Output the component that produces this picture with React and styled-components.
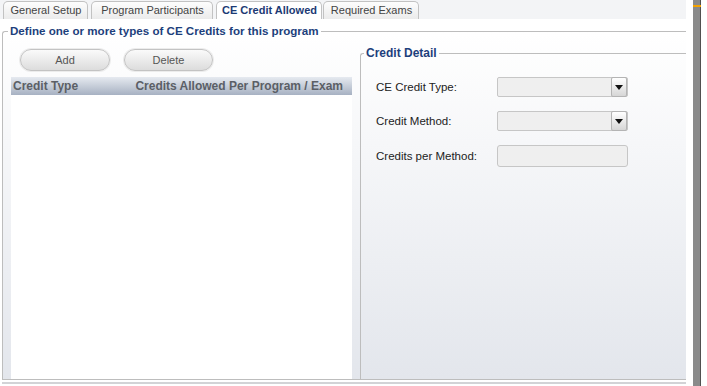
import React from "react";
import styled, { createGlobalStyle } from "styled-components";

const Global = createGlobalStyle`
  html, body { margin: 0; padding: 0; background: #ffffff; }
  body { font-family: "Liberation Sans", Arial, sans-serif; }
  * { box-sizing: border-box; }
`;

const Page = styled.div`
  width: 707px;
  height: 386px;
  display: flex;
  background: #ffffff;
  overflow: hidden;
`;

const MainCol = styled.div`
  width: 686px;
  height: 386px;
  display: flex;
  flex-direction: column;
`;

const TabBar = styled.div`
  height: 19px;
  flex: none;
  background: #f3f4f6;
  display: flex;
  align-items: flex-end;
  padding-left: 3px;
  gap: 3px;
`;

const Tab = styled.div`
  width: ${(p) => p.$w}px;
  height: 18px;
  padding: 0 0 0 1px;
  text-align: center;
  border: 1px solid #c2c2c2;
  border-bottom: none;
  border-radius: 5px 5px 0 0;
  font-size: 11px;
  line-height: 17px;
  white-space: nowrap;
  color: ${(p) => (p.$active ? "#1c3a74" : "#444")};
  font-weight: ${(p) => (p.$active ? 700 : 400)};
  background: ${(p) =>
    p.$active ? "#ffffff" : "linear-gradient(#fdfdfd, #ebebeb)"};
  margin-right: ${(p) => (p.$active ? "-2px" : "0")};
`;

const Body = styled.div`
  flex: 1;
  display: flex;
  flex-direction: column;
  padding-top: 5px;
  min-height: 0;
`;

const OuterSet = styled.fieldset`
  flex: 1;
  margin: 0 0 0 2px;
  padding: 0;
  min-width: 0;
  min-height: 0;
  border: 1px solid #bdbdbd;
  border-right: none;
  border-top-left-radius: 3px;
  background: linear-gradient(#ffffff, #e3e6ec);
  display: flex;
  flex-direction: column;
`;

const Legend = styled.legend`
  margin-left: ${(p) => p.$indent || "5px"};
  padding: 0 2px;
  font-size: ${(p) => p.$size || "11px"};
  line-height: 14px;
  font-weight: 700;
  color: #1d3f7c;
  white-space: nowrap;
`;

const Split = styled.div`
  flex: 1;
  display: flex;
  min-height: 0;
`;

const LeftCol = styled.div`
  width: 349px;
  flex: none;
  display: flex;
  flex-direction: column;
  padding: 11px 0 0 8px;
`;

const ButtonRow = styled.div`
  display: flex;
  gap: 14px;
  padding-left: 9px;
  margin-bottom: 6px;
`;

const PillButton = styled.button`
  width: ${(p) => p.$w}px;
  height: 22px;
  border: 1px solid #c3c3c3;
  border-radius: 11px;
  background: linear-gradient(#fafafa, #dcdcdc);
  box-shadow: 0 0 0 1px #ececec;
  font-family: "Liberation Sans", Arial, sans-serif;
  font-size: 11px;
  color: #555;
  padding: 0;
`;

const Grid = styled.div`
  flex: 1;
  display: flex;
  flex-direction: column;
  background: #ffffff;
`;

const GridHeader = styled.div`
  height: 18px;
  display: flex;
  justify-content: space-between;
  align-items: center;
  padding: 0 9px 0 2px;
  background: linear-gradient(#e6eaf0, #a7b1c2);
  font-size: 12px;
  font-weight: 700;
  color: #5b5f66;
  white-space: nowrap;
`;

const DetailSet = styled.fieldset`
  flex: 1;
  margin: 8px 0 0 8px;
  padding: 17px 0 0 15px;
  min-width: 0;
  border: 1px solid #bdbdbd;
  border-right: none;
  border-bottom: none;
  border-top-left-radius: 3px;
`;

const Form = styled.div`
  display: grid;
  grid-template-columns: 121px 131px;
  grid-auto-rows: min-content;
  row-gap: 14px;
  align-items: center;
`;

const Label = styled.div`
  font-size: 11.5px;
  color: #222;
  white-space: nowrap;
`;

const Select = styled.div`
  height: 20px;
  border: 1px solid #c6c6c6;
  border-radius: 2px;
  background: #efefef;
  display: flex;
  justify-content: flex-end;
  align-items: stretch;
`;

const DropButton = styled.div`
  width: 16px;
  border: 1px solid #b4b4b4;
  border-radius: 2px;
  margin: -1px 0 -1px 0;
  background: linear-gradient(#ffffff, #d6d6d6);
  display: flex;
  align-items: center;
  justify-content: center;
`;

const TextBox = styled.div`
  height: 22px;
  border: 1px solid #c6c6c6;
  border-radius: 3px;
  background: #efefef;
`;

const BottomRule = styled.div`
  flex: none;
  height: 2px;
  margin: 2px 0 2px 2px;
  background: #d2d3d6;
`;

const Scroll = styled.div`
  width: 8px;
  height: 386px;
  margin-left: 7px;
  background: #8a8a8a;
  border-right: 1px solid #505050;
  padding-top: 5px;
`;

const ScrollMark = styled.div`
  height: 2px;
  background: #f5a300;
  margin-right: -1px;
`;

const Arrow = () => (
  <svg width="8" height="5" viewBox="0 0 8 5">
    <path d="M0 0 H8 L4 5 Z" fill="#111" />
  </svg>
);

export default function App() {
  return (
    <Page>
      <Global />
      <MainCol>
        <TabBar>
          <Tab $w={85}>General Setup</Tab>
          <Tab $w={122}>Program Participants</Tab>
          <Tab $w={106} $active>
            CE Credit Allowed
          </Tab>
          <Tab $w={96}>Required Exams</Tab>
        </TabBar>
        <Body>
          <OuterSet>
            <Legend $size="11.6px">
              Define one or more types of CE Credits for this program
            </Legend>
            <Split>
              <LeftCol>
                <ButtonRow>
                  <PillButton $w={90}>Add</PillButton>
                  <PillButton $w={89}>Delete</PillButton>
                </ButtonRow>
                <Grid>
                  <GridHeader>
                    <span>Credit Type</span>
                    <span>Credits Allowed Per Program / Exam</span>
                  </GridHeader>
                </Grid>
              </LeftCol>
              <DetailSet>
                <Legend $indent="-12px" $size="12px">
                  Credit Detail
                </Legend>
                <Form>
                  <Label>CE Credit Type:</Label>
                  <Select>
                    <DropButton>
                      <Arrow />
                    </DropButton>
                  </Select>
                  <Label>Credit Method:</Label>
                  <Select>
                    <DropButton>
                      <Arrow />
                    </DropButton>
                  </Select>
                  <Label>Credits per Method:</Label>
                  <TextBox />
                </Form>
              </DetailSet>
            </Split>
          </OuterSet>
          <BottomRule />
        </Body>
      </MainCol>
      <Scroll>
        <ScrollMark />
      </Scroll>
    </Page>
  );
}
